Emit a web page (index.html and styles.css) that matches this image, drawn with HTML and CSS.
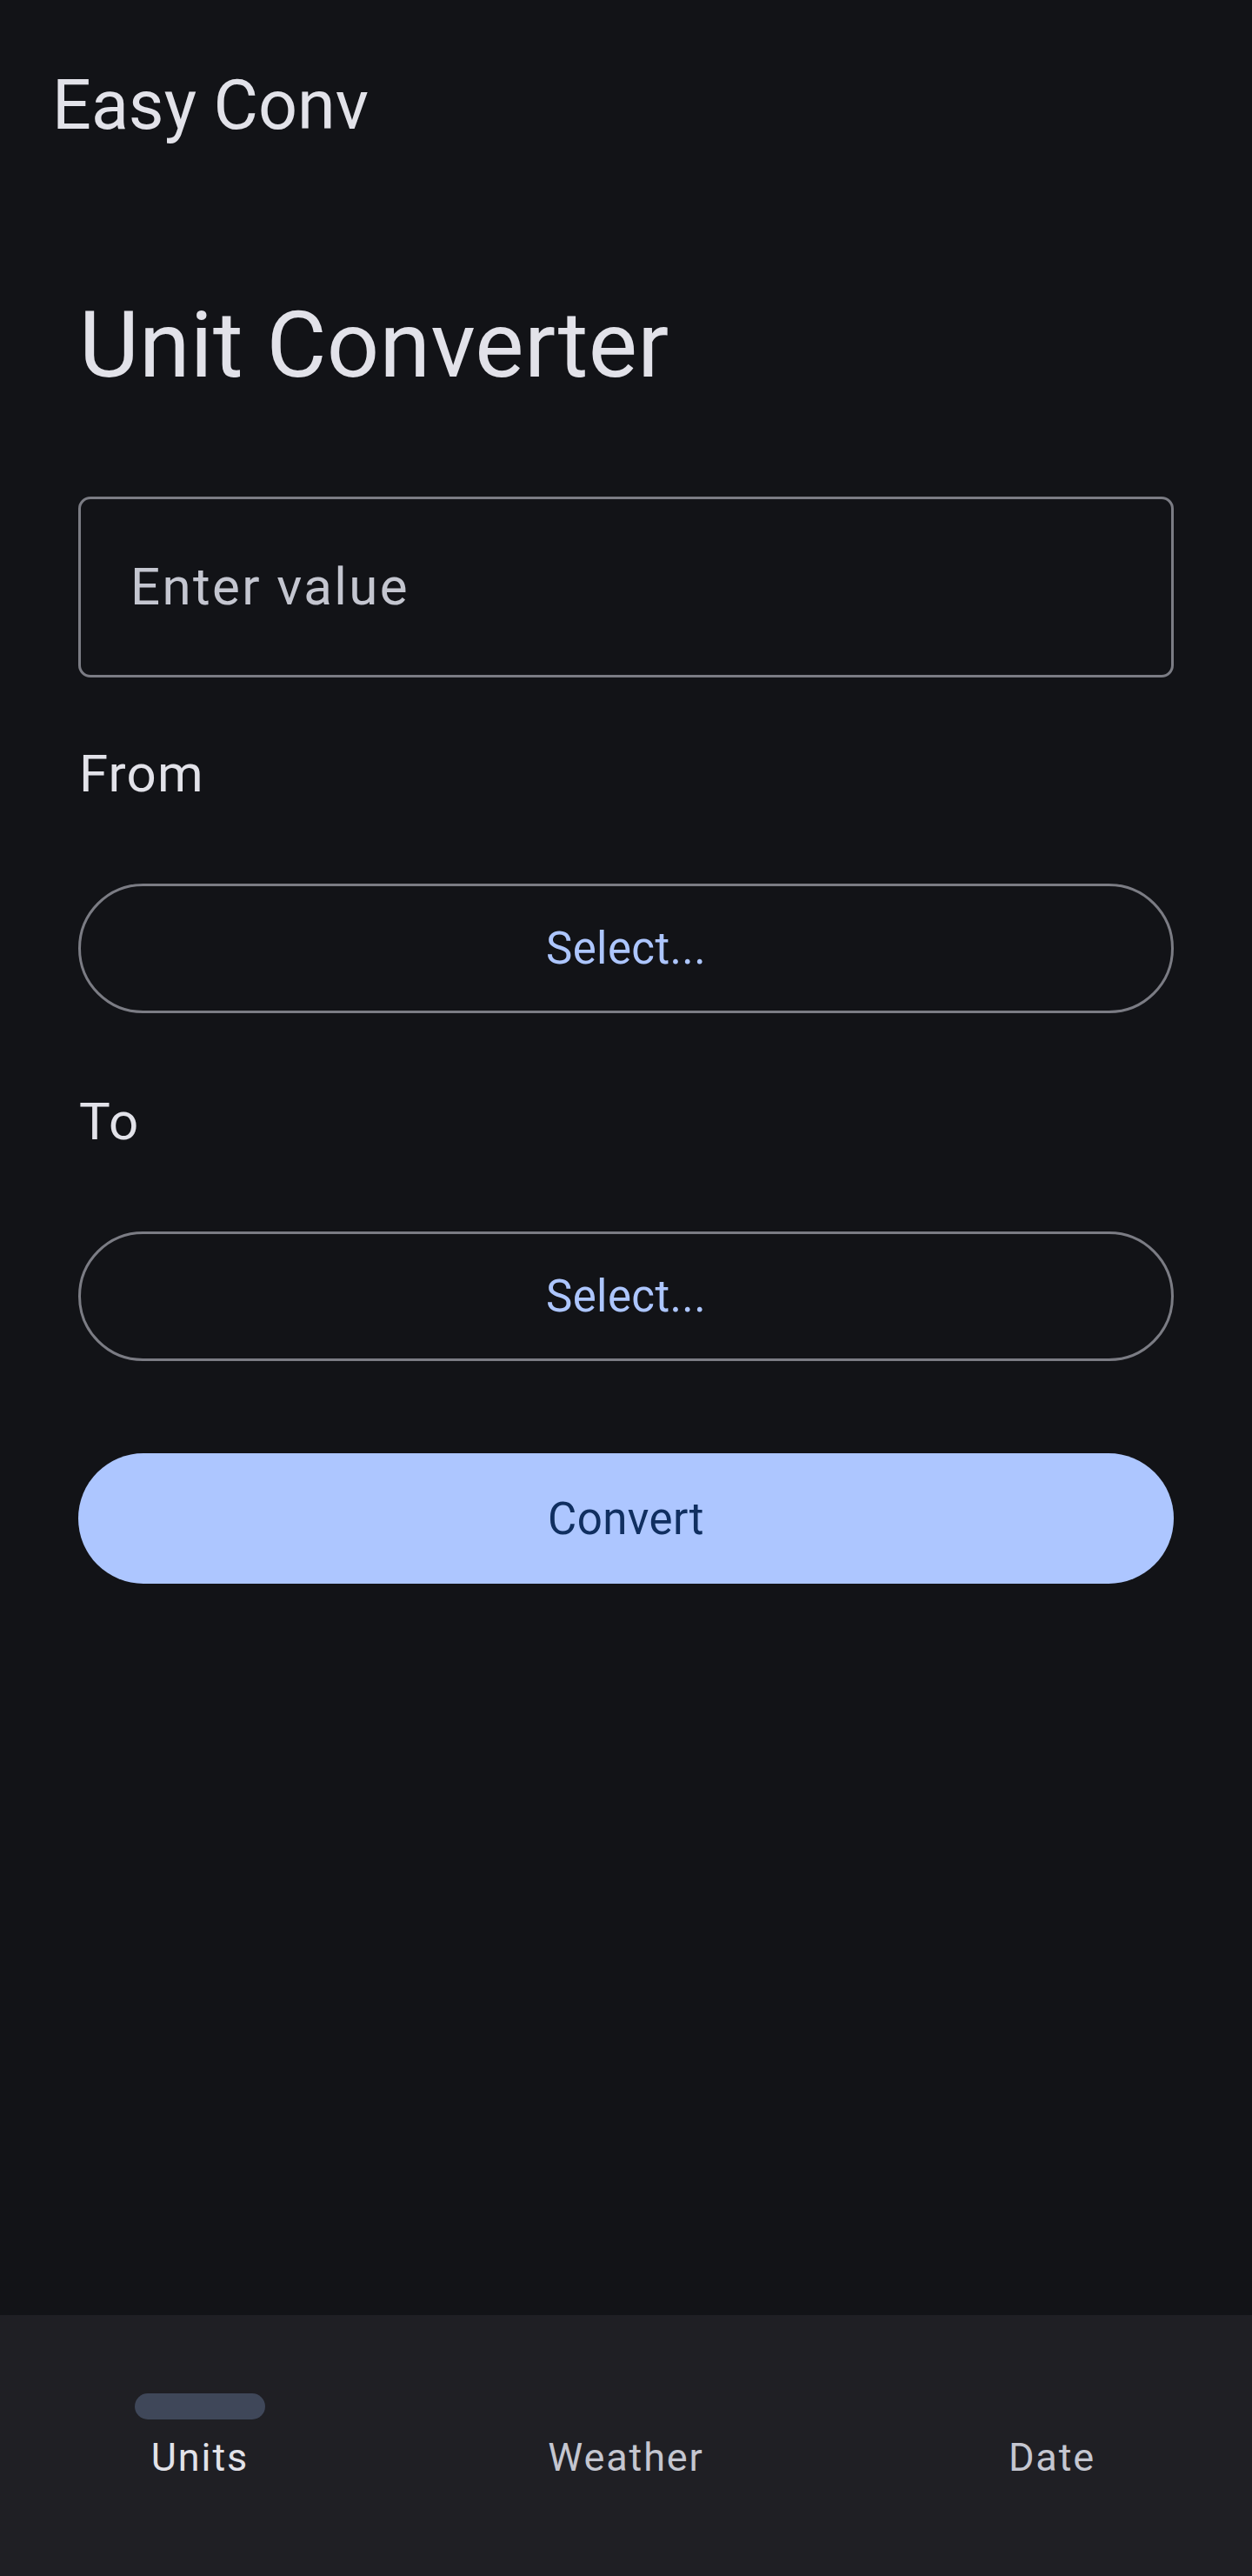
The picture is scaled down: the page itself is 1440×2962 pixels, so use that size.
FILE: index.html
```html
<!DOCTYPE html>
<html lang="en">
<head>
<meta charset="utf-8">
<title>Easy Conv</title>
<link rel="stylesheet" href="styles.css">
</head>
<body>
<div class="app">
  <header class="appbar">Easy Conv</header>
  <main class="content">
    <h1 class="headline">Unit Converter</h1>
    <div class="field"><span class="placeholder">Enter value</span></div>
    <div class="label label-from">From</div>
    <button class="select">Select...</button>
    <div class="label label-to">To</div>
    <button class="select">Select...</button>
    <button class="convert">Convert</button>
  </main>
  <nav class="navbar">
    <div class="nav-item active"><span class="pill"></span><span class="nav-label">Units</span></div>
    <div class="nav-item"><span class="pill"></span><span class="nav-label">Weather</span></div>
    <div class="nav-item"><span class="pill"></span><span class="nav-label">Date</span></div>
  </nav>
</div>
</body>
</html>
```
FILE: styles.css
```css
html, body {
  margin: 0;
  padding: 0;
  height: 100%;
  background: #121317;
}
body {
  font-family: Roboto, "Noto Sans", sans-serif;
  color: #e2e2e9;
}
.app {
  min-height: 100vh;
  display: flex;
  flex-direction: column;
}
.appbar {
  padding: 71px 0 0 60px;
  font-size: 79px;
  line-height: 100px;
  height: 100px;
}
.content {
  flex: 1;
  display: flex;
  flex-direction: column;
  padding: 0 90px;
}
.headline {
  margin: 161px 0 0 0;
  font-weight: 400;
  font-size: 106px;
  line-height: 130px;
  height: 130px;
  padding-left: 1px;
  letter-spacing: 0.3px;
}
.field {
  margin-top: 109px;
  height: 208px;
  box-sizing: border-box;
  border: 3.5px solid #7b7c84;
  border-radius: 14px;
  display: flex;
  align-items: center;
  padding-left: 57px;
}
.placeholder {
  font-size: 60px;
  line-height: 60px;
  letter-spacing: 2.4px;
  color: #c4c6d0;
}
.label {
  font-size: 60px;
  line-height: 90px;
  height: 90px;
  letter-spacing: 1.2px;
  padding-left: 1px;
}
.label-from { margin-top: 66px; }
.label-to { margin-top: 80px; }
.select {
  margin-top: 81px;
  height: 149px;
  box-sizing: border-box;
  border: 3.5px solid #7b7c84;
  border-radius: 75px;
  background: transparent;
  color: #adc6ff;
  font-family: Roboto, "Noto Sans", sans-serif;
  font-size: 51px;
  letter-spacing: 0.4px;
  padding: 0;
}
.convert {
  margin-top: 106px;
  height: 150px;
  border: none;
  border-radius: 75px;
  background: #adc6ff;
  color: #102f60;
  font-family: Roboto, "Noto Sans", sans-serif;
  font-size: 51px;
  letter-spacing: 0.4px;
  padding: 0;
}
.navbar {
  height: 300px;
  background: #1f1f24;
  display: flex;
  justify-content: space-between;
  padding: 0 80px;
}
.nav-item {
  width: 300px;
  display: flex;
  flex-direction: column;
  align-items: center;
  padding-top: 90px;
}
.pill {
  width: 150px;
  height: 30px;
  border-radius: 15px;
  background: transparent;
}
.nav-item.active .pill {
  background: #3f4759;
}
.nav-label {
  margin-top: 14px;
  font-size: 45px;
  line-height: 60px;
  letter-spacing: 1.9px;
  color: #c4c6d0;
}
.nav-item.active .nav-label {
  color: #e2e2e9;
}
```
